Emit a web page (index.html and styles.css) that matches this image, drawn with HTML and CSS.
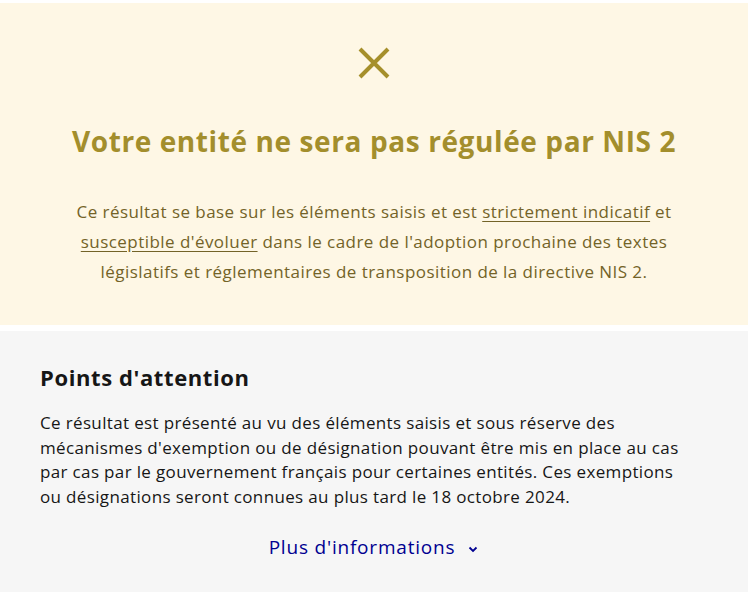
FILE: index.html
```html
<!DOCTYPE html>
<html lang="fr">
<head>
<meta charset="utf-8">
<link rel="stylesheet" href="styles.css">
</head>
<body>
<main class="page">
  <section class="result">
    <svg class="result-icon" width="32" height="32" viewBox="0 0 32 32" aria-hidden="true">
      <path d="M2 2 L30 30 M30 2 L2 30" stroke="currentColor" stroke-width="4" fill="none"/>
    </svg>
    <h1 class="result-title">Votre entité ne sera pas régulée par NIS 2</h1>
    <p class="result-text">Ce résultat se base sur les éléments saisis et est <a href="#" class="result-link">strictement indicatif</a> et <a href="#" class="result-link">susceptible d'évoluer</a> dans le cadre de l'adoption prochaine des textes législatifs et réglementaires de transposition de la directive NIS 2.</p>
  </section>
  <section class="attention">
    <h2 class="attention-title">Points d'attention</h2>
    <p class="attention-text">Ce résultat est présenté au vu des éléments saisis et sous réserve des mécanismes d'exemption ou de désignation pouvant être mis en place au cas par cas par le gouvernement français pour certaines entités. Ces exemptions ou désignations seront connues au plus tard le 18 octobre 2024.</p>
    <div class="more">
      <button class="more-btn" type="button">Plus d'informations
        <svg class="more-chevron" width="12" height="12" viewBox="0 0 12 12" aria-hidden="true"><path d="M2.5 4.5 L6 8 L9.5 4.5" stroke="currentColor" stroke-width="1.8" fill="none"/></svg>
      </button>
    </div>
  </section>
</main>
</body>
</html>
```
FILE: styles.css
```css
html, body {
  margin: 0;
  padding: 0;
  background: #ffffff;
}
body {
  font-family: "Open Sans", "Noto Sans", sans-serif;
}
.page {
  padding-top: 3px;
  display: flex;
  flex-direction: column;
  gap: 6px;
}
.result {
  background: #fef7e5;
  display: flex;
  flex-direction: column;
  align-items: center;
  padding: 44px 40px 0;
  height: 322px;
  box-sizing: border-box;
  text-align: center;
}
.result-icon {
  color: #a58f2b;
  display: block;
}
.result-title {
  margin: 44px 0 0;
  color: #a38e2c;
  font-size: 28px;
  font-weight: 700;
  line-height: 36px;
  letter-spacing: 0.6px;
}
.result-text {
  margin: 38px 0 0;
  color: #736328;
  font-size: 17px;
  line-height: 30px;
  letter-spacing: 0.45px;
}
.result-link {
  color: inherit;
  text-decoration: underline;
  text-underline-offset: 3px;
}
.attention {
  background: #f6f6f6;
  padding: 32px 53px 30px 40px;
  height: 261px;
  box-sizing: border-box;
}
.attention-title {
  margin: 0;
  color: #161616;
  font-size: 22px;
  font-weight: 700;
  line-height: 28px;
  letter-spacing: 0.6px;
}
.attention-text {
  margin: 20px 0 0;
  color: #161616;
  font-size: 17px;
  line-height: 24.5px;
  letter-spacing: 0.35px;
}
.more {
  display: flex;
  justify-content: center;
  margin-top: 26px;
  padding-left: 13px;
}
.more-btn {
  background: none;
  border: 0;
  padding: 0;
  font-family: inherit;
  color: #000091;
  font-size: 19px;
  line-height: 24px;
  letter-spacing: 0.8px;
  display: flex;
  align-items: center;
  gap: 12px;
  cursor: pointer;
}
.more-chevron {
  display: block;
  margin-top: 3px;
}
```
